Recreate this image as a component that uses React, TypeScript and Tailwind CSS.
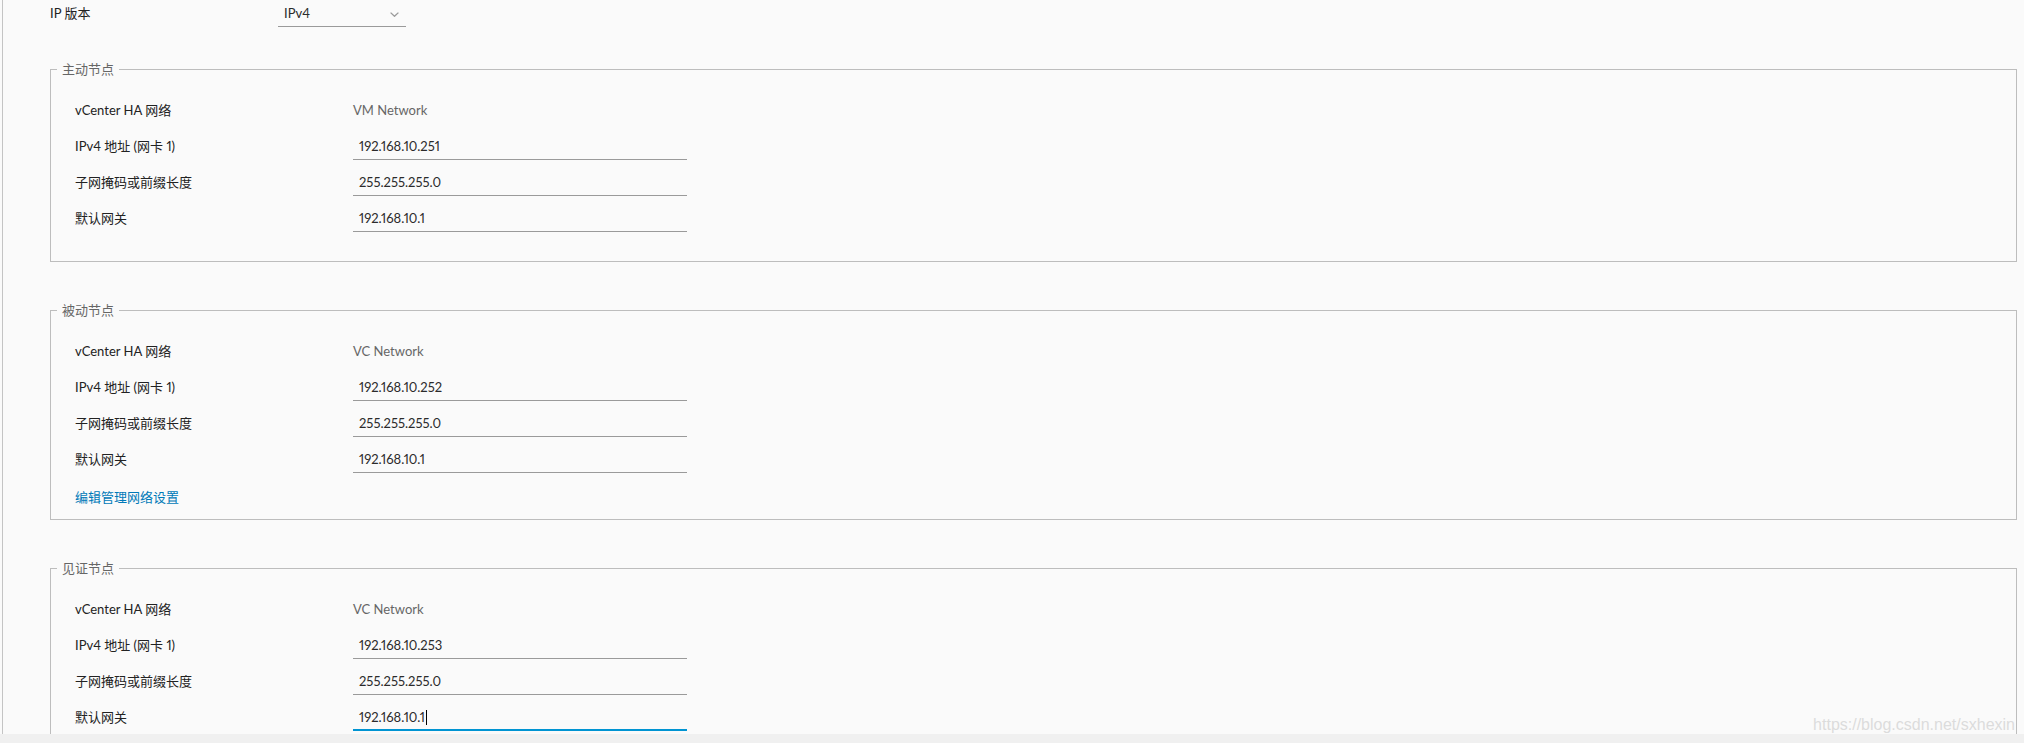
import React from "react";

type Row = { label: string; value: string; input?: boolean; active?: boolean };

interface NodeFieldsetProps {
  title: string;
  network: string;
  ip: string;
  showEditLink?: boolean;
  focusGateway?: boolean;
  className?: string;
}

function Chevron() {
  return (
    <svg width="9" height="5" viewBox="0 0 9 5" className="mt-[11px]">
      <polyline
        points="0.6,0.6 4.5,4.3 8.4,0.6"
        fill="none"
        stroke="#9a9a9a"
        strokeWidth="1.3"
      />
    </svg>
  );
}

function FieldRow({ label, value, input, active }: Row) {
  return (
    <div className="flex h-[36px] items-center">
      <div className="w-[278px] text-[#222]">{label}</div>
      {input ? (
        <div
          className={`h-[26px] w-[334px] pl-[6px] leading-[24px] text-[#2b2b2b] ${
            active ? "border-b-2 border-[#0094d2]" : "border-b border-[#9a9a9a]"
          }`}
        >
          {value}
          {active && (
            <span className="ml-px inline-block h-[15px] w-px bg-black align-[-3px]" />
          )}
        </div>
      ) : (
        <div className="text-[#666]">{value}</div>
      )}
    </div>
  );
}

function NodeFieldset({
  title,
  network,
  ip,
  showEditLink = false,
  focusGateway = false,
  className = "",
}: NodeFieldsetProps) {
  return (
    <fieldset
      className={`border border-[#bdbdbd] px-[24px] pt-[15px] ${
        showEditLink ? "pb-[12px]" : "pb-[24px]"
      } ${className}`}
    >
      <legend className="ml-[-18px] px-[5px] leading-[18px] text-[#666]">
        {title}
      </legend>
      <FieldRow label="vCenter HA 网络" value={network} />
      <FieldRow label="IPv4 地址 (网卡 1)" value={ip} input />
      <FieldRow label="子网掩码或前缀长度" value="255.255.255.0" input />
      <FieldRow
        label="默认网关"
        value="192.168.10.1"
        input
        active={focusGateway}
      />
      {showEditLink && (
        <a href="#" className="mt-[9px] block leading-[20px] text-[#0079b8]">
          编辑管理网络设置
        </a>
      )}
    </fieldset>
  );
}

export default function App() {
  return (
    <div className="relative flex h-[743px] w-[2024px] flex-col overflow-hidden bg-[#fafafa] font-['Lato','Noto_Sans_CJK_SC',sans-serif] text-[13px] proportional-nums">
      <div className="ml-[2px] h-[734px] overflow-hidden border-l border-[#c4c4c4] pl-[47px] pr-[7px]">
        {/* IP version select */}
        <div className="flex items-start pt-[1px]">
          <div className="w-[228px] leading-[24px] text-[#222]">IP 版本</div>
          <div className="flex h-[26px] w-[128px] justify-between border-b border-[#9a9a9a] pl-[6px] pr-[7px]">
            <span className="leading-[24px] text-[#2b2b2b]">IPv4</span>
            <Chevron />
          </div>
        </div>

        <NodeFieldset
          className="mt-[33px]"
          title="主动节点"
          network="VM Network"
          ip="192.168.10.251"
        />
        <NodeFieldset
          className="mt-[39px]"
          title="被动节点"
          network="VC Network"
          ip="192.168.10.252"
          showEditLink
        />
        <NodeFieldset
          className="mt-[39px]"
          title="见证节点"
          network="VC Network"
          ip="192.168.10.253"
          focusGateway
        />
      </div>
      <div className="h-[9px] bg-[#f0f0f0]" />

      {/* watermark */}
      <div className="absolute bottom-[9px] right-[9px] font-['Liberation_Sans',sans-serif] text-[16px] leading-[18px] text-[#dcdcdc]">
        https://blog.csdn.net/sxhexin
      </div>
    </div>
  );
}
